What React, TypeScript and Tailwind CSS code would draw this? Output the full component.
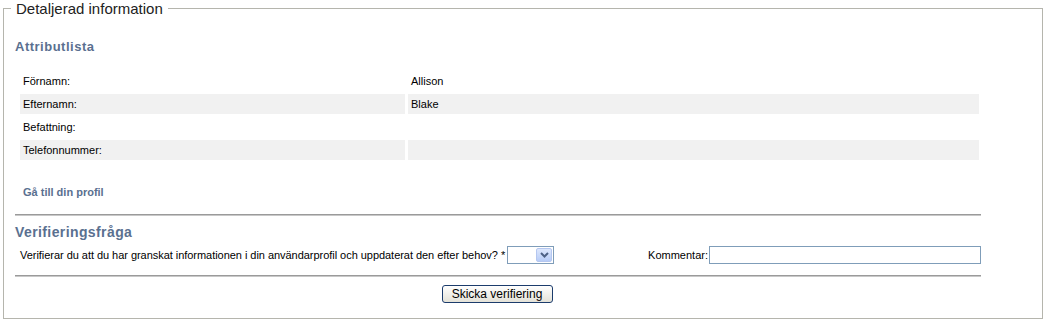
import React from "react"

const rows = [
  { label: "Förnamn:", value: "Allison", shaded: false },
  { label: "Efternamn:", value: "Blake", shaded: true },
  { label: "Befattning:", value: "", shaded: false },
  { label: "Telefonnummer:", value: "", shaded: true },
]

function Divider() {
  return <div className="h-[2px] w-[966px] border-t border-[#9a9a9a] bg-[#c8c8c8]" />
}

export default function App() {
  return (
    <div className="bg-white w-[1049px] h-[323px] text-black" style={{ fontFamily: '"Liberation Sans", Arial, sans-serif' }}>
      <fieldset className="ml-[3px] w-[1040px] h-[319px] border border-[#b5b5ad] pl-[11px] pr-0 pt-0 pb-0 m-0">
        <legend className="ml-[-4px] px-[5px] text-[15px] leading-[17px] text-[#222]">Detaljerad information</legend>

        <div className="mt-[23px] text-[13px] leading-[14px] font-bold text-[#5a7090] tracking-[0.5px]">Attributlista</div>

        <div className="mt-[17px] ml-[5px] flex flex-col gap-[3px] w-[959px]">
          {rows.map((r) => (
            <div key={r.label} className="flex gap-[3px] h-[20px] text-[11px] leading-[20px]">
              <div className={`w-[385px] pl-[3px] ${r.shaded ? "bg-[#f1f1f1]" : ""}`}>{r.label}</div>
              <div className={`flex-1 pl-[3px] ${r.shaded ? "bg-[#f1f1f1]" : ""}`}>{r.value}</div>
            </div>
          ))}
        </div>

        <div className="mt-[25px] ml-[8px] text-[11px] leading-[14px] font-bold text-[#5a7090]">Gå till din profil</div>

        <div className="mt-[15px]">
          <Divider />
        </div>

        <div className="mt-[8px] text-[14px] leading-[16px] font-bold text-[#5a7090] tracking-[0.4px]">Verifieringsfråga</div>

        <div className="mt-[6px] flex items-center h-[18px] w-[966px] text-[11px]">
          <span className="ml-[5px] tracking-[-0.04px]">Verifierar du att du har granskat informationen i din användarprofil och uppdaterat den efter behov? *</span>
          <div className="ml-[2px] w-[47px] h-[18px] border border-[#7f9db9] bg-white flex justify-end items-center pr-[1px]">
            <div className="w-[16px] h-[14px] rounded-[2px] border border-[#b5c7f0] bg-gradient-to-b from-[#dde7fc] to-[#b7ccf7] flex items-center justify-center">
              <svg width="9" height="6" viewBox="0 0 9 6">
                <path d="M1 1 L4.5 4.5 L8 1" fill="none" stroke="#4d6185" strokeWidth="2" />
              </svg>
            </div>
          </div>
          <span className="ml-auto mr-[1px]">Kommentar:</span>
          <div className="w-[272px] h-[18px] border border-[#7f9db9] bg-white" />
        </div>

        <div className="mt-[11px]">
          <Divider />
        </div>

        <div className="mt-[8px] w-[966px] flex justify-center">
          <button className="ml-[-2px] w-[111px] h-[18px] rounded-[3px] border border-[#1c3c6c] bg-gradient-to-b from-white to-[#e4e2d8] text-[12px] leading-[14px] text-black">
            Skicka verifiering
          </button>
        </div>
      </fieldset>
    </div>
  )
}
